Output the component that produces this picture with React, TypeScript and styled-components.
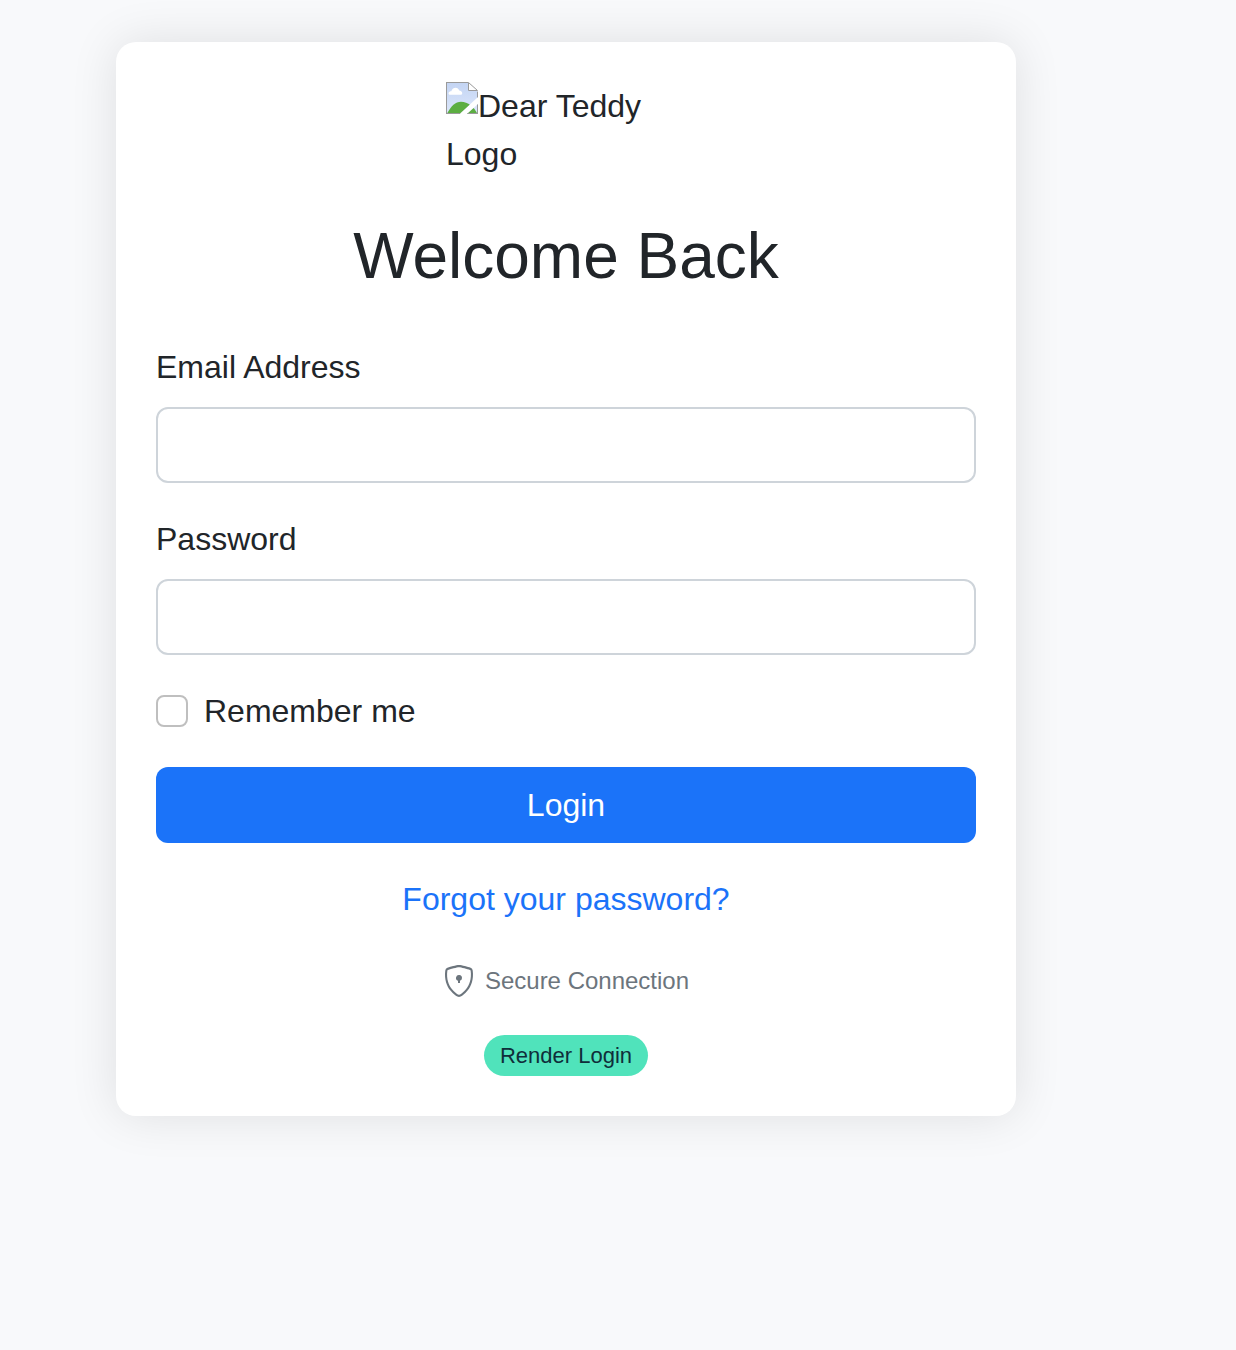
import React from "react";
import styled, { createGlobalStyle } from "styled-components";

const GlobalStyle = createGlobalStyle`
  *, *::before, *::after { box-sizing: border-box; }
  body {
    margin: 0;
    background: #f8f9fb;
    color: #212529;
    font-family: "Liberation Sans", Arial, sans-serif;
    font-size: 32px;
    line-height: 48px;
  }
`;

const Page = styled.main`
  min-height: 1350px;
  padding: 42px 116px;
`;

const Card = styled.form`
  display: flex;
  flex-direction: column;
  width: 900px;
  height: 1074px;
  padding: 40px;
  border-radius: 20px;
  background: #fff;
  box-shadow: 0 0 48px rgba(0, 0, 0, 0.105);
`;

const Logo = styled.div`
  width: 240px;
  height: 96px;
  margin: 0 auto 40px;
`;

const LogoIcon = styled.svg`
  display: inline-block;
  width: 32px;
  height: 32px;
  vertical-align: top;
`;

const Title = styled.h2`
  margin: 0 0 48px;
  font-size: 64px;
  font-weight: 400;
  line-height: 77px;
  text-align: center;
`;

const Field = styled.div`
  display: flex;
  flex-direction: column;
  gap: 16px;
  margin-bottom: 32px;
`;

const Input = styled.input`
  width: 100%;
  height: 76px;
  padding: 12px 24px;
  border: 2px solid #ced4da;
  border-radius: 12px;
  background: #fff;
  font: inherit;
  outline: none;
`;

const CheckRow = styled.label`
  display: flex;
  align-items: center;
  gap: 16px;
  margin-bottom: 32px;
`;

const Checkbox = styled.input`
  appearance: none;
  width: 32px;
  height: 32px;
  margin: 0;
  border: 2px solid #bfbfbf;
  border-radius: 8px;
  background: #fff;
`;

const LoginButton = styled.button`
  height: 76px;
  padding: 0;
  border: 0;
  border-radius: 12px;
  background: #1b73f9;
  color: #fff;
  font: inherit;
`;

const ForgotLink = styled.a`
  align-self: center;
  margin-top: 32px;
  color: #1b73f9;
  text-decoration: none;
`;

const Secure = styled.div`
  display: flex;
  align-items: center;
  justify-content: center;
  gap: 10px;
  margin-top: 40px;
  color: #6c757d;
  font-size: 24px;
  line-height: 36px;
`;

const Badge = styled.span`
  align-self: center;
  width: 164px;
  height: 41px;
  margin-top: 36px;
  border-radius: 21px;
  background: #50e3bb;
  color: #0f2e3a;
  font-size: 22px;
  line-height: 41px;
  text-align: center;
`;

function MissingImage() {
  return (
    <LogoIcon viewBox="0 0 32 32">
      <defs>
        <linearGradient id="sky" x1="0" y1="0" x2="0" y2="1">
          <stop offset="0" stopColor="#c3d4f3" />
          <stop offset="1" stopColor="#dce7fb" />
        </linearGradient>
        <clipPath id="sheet">
          <path d="M0 0H22L32 10V15L13.5 32H0Z M32 22V32H21Z" />
        </clipPath>
      </defs>
      <g clipPath="url(#sheet)">
        <path d="M0 0H32V32H0Z" fill="url(#sky)" />
        <path d="M3.4 12.8C1.6 11.4 3 9 5.3 9.2C6.6 4.6 12.4 4.6 13.2 8.6C16.4 8.8 17 12 15.4 12.8Z" fill="#fff" />
        <path d="M0.8 32C5 24 9.5 19.8 15 19.8C22 19.8 28 25 31.5 32Z" fill="#5cae42" />
        <path d="M0.5 0V32M0 0.5H22M0 31.5H32M31.5 8V32" stroke="#9a9a9a" fill="none" />
      </g>
      <path d="M22.5 0.5V8.5H31.5Z" fill="#fff" stroke="#9a9a9a" />
    </LogoIcon>
  );
}

function ShieldIcon() {
  return (
    <svg width="32" height="32" viewBox="0 0 16 16" fill="currentColor">
      <path d="M5.338 1.59a61 61 0 0 0-2.837.856.48.48 0 0 0-.328.39c-.554 4.157.726 7.19 2.253 9.188a10.7 10.7 0 0 0 2.287 2.233c.346.244.652.42.893.533q.18.085.293.118a1 1 0 0 0 .101.025 1 1 0 0 0 .1-.025q.114-.034.294-.118c.24-.113.547-.29.893-.533a10.7 10.7 0 0 0 2.287-2.233c1.527-1.997 2.807-5.031 2.253-9.188a.48.48 0 0 0-.328-.39c-.651-.213-1.75-.56-2.837-.855C9.552 1.29 8.531 1.067 8 1.067c-.53 0-1.552.223-2.662.524zM5.072.56C6.157.265 7.31 0 8 0s1.843.265 2.928.56c1.11.3 2.229.655 2.887.87a1.54 1.54 0 0 1 1.044 1.262c.596 4.477-.787 7.795-2.465 9.99a11.8 11.8 0 0 1-2.517 2.453 7 7 0 0 1-1.048.625c-.28.132-.581.24-.829.24s-.548-.108-.829-.24a7 7 0 0 1-1.048-.625 11.8 11.8 0 0 1-2.517-2.453C1.928 10.487.545 7.169 1.141 2.692A1.54 1.54 0 0 1 2.185 1.43 63 63 0 0 1 5.072.56" />
      <path d="M9.5 6.5a1.5 1.5 0 0 1-1 1.415V9h-1V7.915A1.5 1.5 0 1 1 9.5 6.5" />
    </svg>
  );
}

export default function App() {
  return (
    <>
      <GlobalStyle />
      <Page>
        <Card onSubmit={(e) => e.preventDefault()}>
          <Logo>
            <MissingImage />
            Dear Teddy Logo
          </Logo>
          <Title>Welcome Back</Title>
          <Field>
            <label htmlFor="email">Email Address</label>
            <Input id="email" type="email" />
          </Field>
          <Field>
            <label htmlFor="password">Password</label>
            <Input id="password" type="password" />
          </Field>
          <CheckRow>
            <Checkbox type="checkbox" />
            Remember me
          </CheckRow>
          <LoginButton type="submit">Login</LoginButton>
          <ForgotLink href="#">Forgot your password?</ForgotLink>
          <Secure>
            <ShieldIcon />
            Secure Connection
          </Secure>
          <Badge>Render Login</Badge>
        </Card>
      </Page>
    </>
  );
}
